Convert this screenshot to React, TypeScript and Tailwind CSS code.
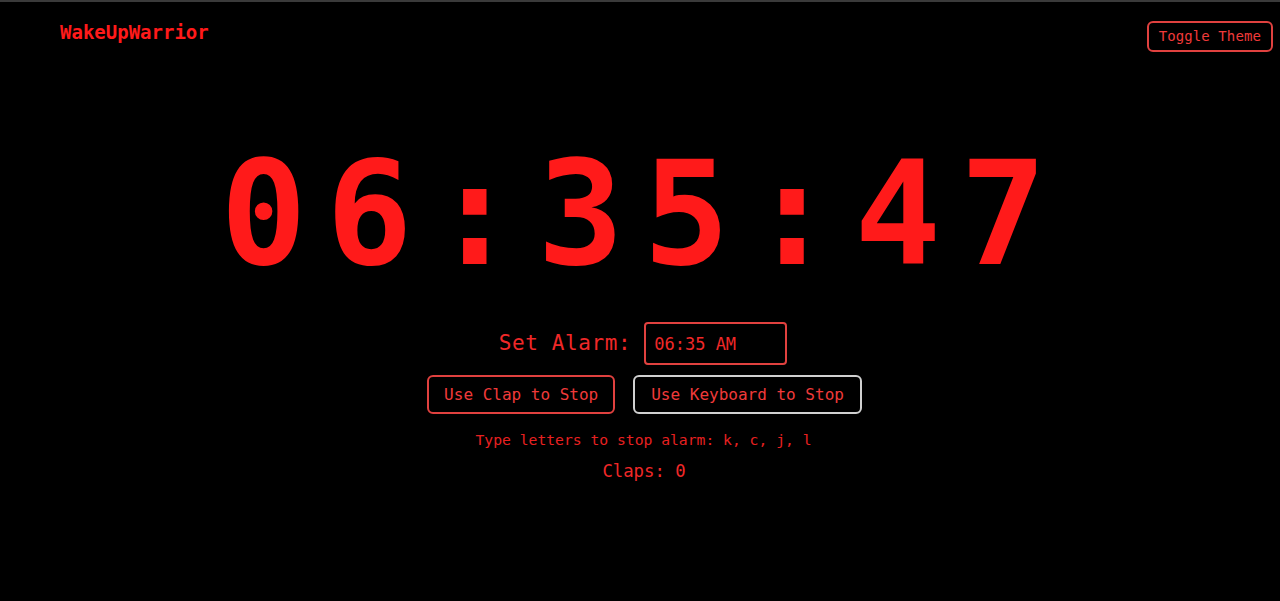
import React, { useState } from "react";

const mono = "font-['DejaVu_Sans_Mono','Liberation_Mono',monospace]";

export default function App() {
  const [mode, setMode] = useState<"clap" | "keyboard">("keyboard");
  const [alarm, setAlarm] = useState("06:35 AM");
  const claps = 0;

  return (
    <div className={`min-h-[601px] bg-black border-t-2 border-[#3a3a3a] text-[#ff1a1a] ${mono}`}>
      <header className="flex items-start justify-between pl-[60px] pr-[7px] pt-[19px]">
        <h1 className="text-[19px] font-bold leading-6 -mt-[1px]">WakeUpWarrior</h1>
        <button className="h-[31px] px-[10px] rounded-md border-2 border-[#e0413f] text-[14px] tracking-[0.1px] text-[#f03a3a]">
          Toggle Theme
        </button>
      </header>

      <main className="flex flex-col items-center">
        <div className="mt-[90px] ml-[6px] text-[144px] leading-none font-bold tracking-[19px]">
          06:35:47
        </div>

        <div className="mt-[36px] flex items-center gap-[13px] ml-[6px]">
          <label className="text-[21px] tracking-[0.6px] text-[#f02828]">Set Alarm:</label>
          <input
            value={alarm}
            onChange={(e) => setAlarm(e.target.value)}
            className={`w-[143px] h-[43px] px-[8px] rounded border-2 border-[#e0413f] bg-black text-[17px] text-[#f02828] outline-none ${mono}`}
          />
        </div>

        <div className="mt-[10px] ml-[9px] flex gap-[18px]">
          <button
            onClick={() => setMode("clap")}
            className={`h-[39px] px-[15px] rounded-md border-2 text-[16px] text-[#f03a3a] ${
              mode === "clap" ? "border-[#d0d0d0]" : "border-[#e0413f]"
            }`}
          >
            Use Clap to Stop
          </button>
          <button
            onClick={() => setMode("keyboard")}
            className={`h-[39px] px-[16px] rounded-md border-2 text-[16px] text-[#f03a3a] ${
              mode === "keyboard" ? "border-[#d0d0d0]" : "border-[#e0413f]"
            }`}
          >
            Use Keyboard to Stop
          </button>
        </div>

        <p className="mt-[16px] ml-[7px] text-[14.7px] leading-5 text-[#e82020]">
          Type letters to stop alarm: k, c, j, l
        </p>
        <p className="mt-[9px] ml-[8px] text-[17.3px] leading-6 text-[#f02828]">Claps: {claps}</p>
      </main>
    </div>
  );
}
